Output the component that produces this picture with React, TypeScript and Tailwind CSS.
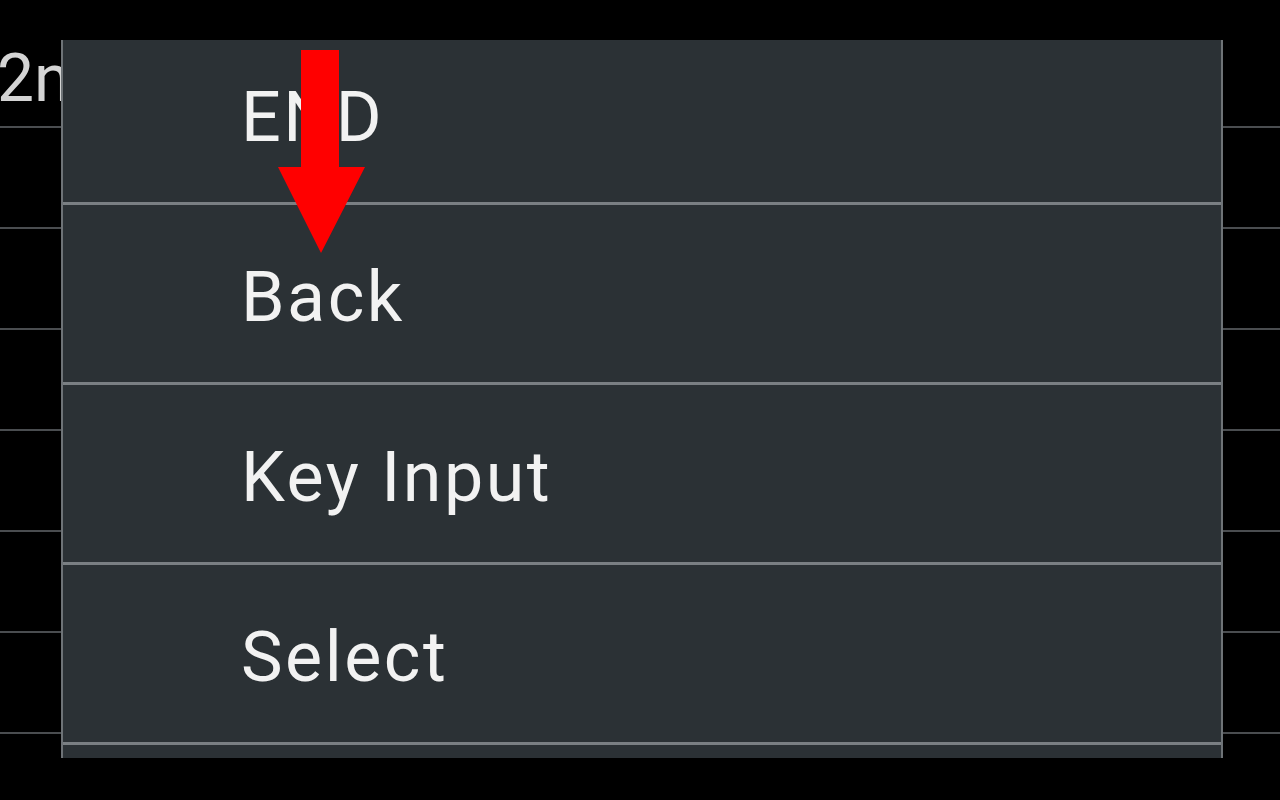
import { ReactNode } from 'react';

// Items of the overflow menu, top to bottom
const menuItems = ['END', 'Back', 'Key Input', 'Select'];

function BackgroundRow({ children }: { children?: ReactNode }) {
    return (
        <div className="h-[101px] border-b-2 border-[#4a4d50] flex items-end">
            {children}
        </div>
    );
}

function MenuRow({ label }: { label: string }) {
    return (
        <div className="h-[180px] shrink-0 border-b-[3px] border-[#7a7f83] flex items-center pl-[178px] pt-[6px]">
            <span className="text-[70px] leading-none text-[#f2f2f2] tracking-[2.5px]">{label}</span>
        </div>
    );
}

function RedArrow() {
    return (
        <svg
            className="absolute left-[278px] top-[50px]"
            width="88"
            height="204"
            viewBox="0 0 88 204"
        >
            <path d="M23 0 H61 V117 H87 L43 203 L0 117 H23 Z" fill="#ff0000" />
        </svg>
    );
}

export default function App() {
    return (
        <div
            className="relative w-[1280px] h-[800px] bg-black overflow-hidden"
            style={{ fontFamily: 'Roboto, "Noto Sans", sans-serif' }}
        >
            {/* list underneath the popup */}
            <div className="pt-[27px]">
                <BackgroundRow>
                    <span className="text-[66px] leading-none text-[#d4d4d4] -ml-[3px] mb-[14px] whitespace-nowrap">2nd</span>
                </BackgroundRow>
                <BackgroundRow />
                <BackgroundRow />
                <BackgroundRow />
                <BackgroundRow />
                <BackgroundRow />
                <BackgroundRow />
            </div>

            {/* popup menu */}
            <div className="absolute left-[61px] top-[40px] w-[1162px] h-[718px] bg-[#2b3135] border-x-2 border-[#6e7377] overflow-hidden">
                <div className="-mt-[15px] flex flex-col">
                    {menuItems.map((item) => (
                        <MenuRow key={item} label={item} />
                    ))}
                </div>
            </div>

            <RedArrow />
        </div>
    );
}
